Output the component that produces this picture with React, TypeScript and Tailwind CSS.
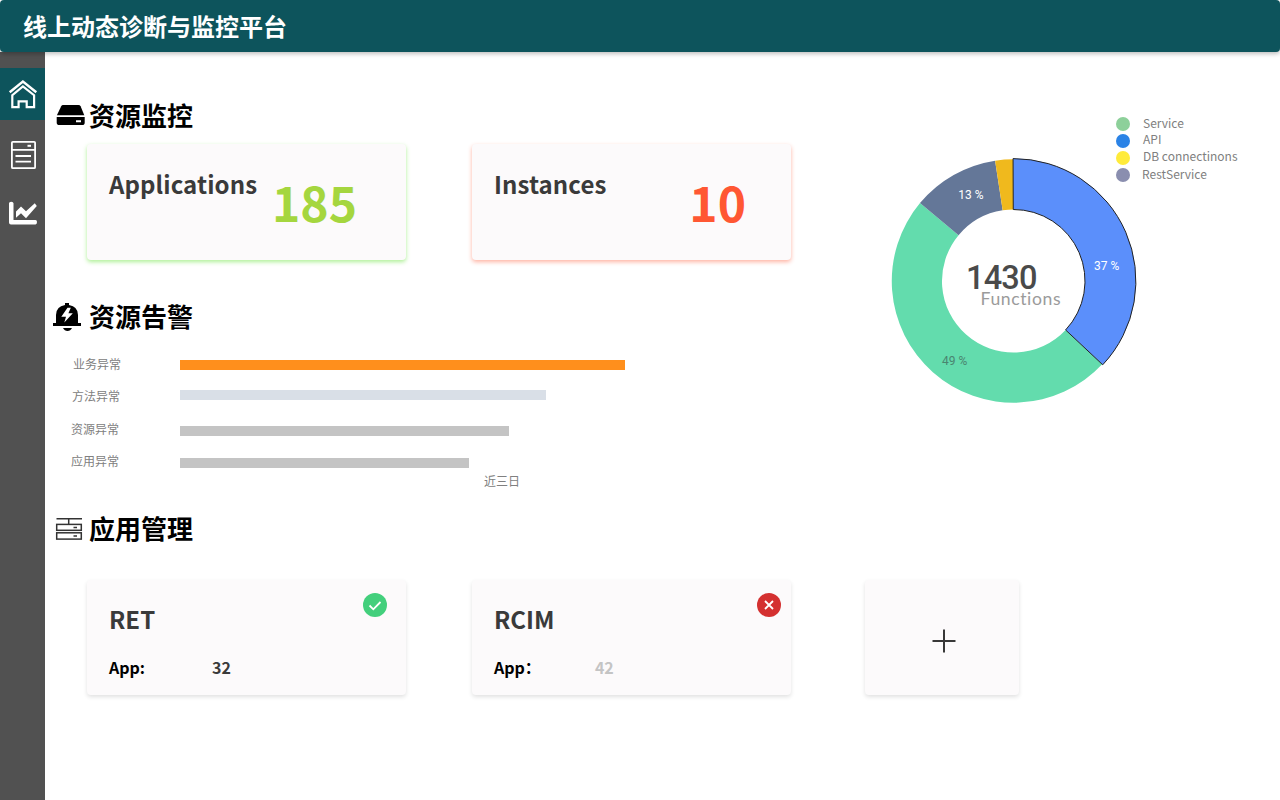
import React from "react";

const cjk = "font-['Noto_Sans_CJK_SC','Noto_Sans',sans-serif]";

function HomeIcon() {
  return (
    <svg className="h-[52px] w-[45px]" viewBox="0 68 45 52" fill="none" stroke="#fff" strokeWidth="2.4">
      <path d="M9.7 92.3 22.9 81.6 36.3 92.3" />
      <path d="M12.3 107.2V95.2L22.9 86.3 34.1 95.2V107.2H26.7V101.3H18.6V107.2Z" strokeWidth="2.2" />
    </svg>
  );
}

function ListIcon() {
  return (
    <svg className="h-[52px] w-[45px]" viewBox="0 129 45 52" fill="none" stroke="#fff" strokeWidth="1.8">
      <rect x="11.9" y="141.8" width="23.2" height="26.4" rx="1" />
      <path d="M12 149.8H35M15.5 156H31M15.5 161.6H31" />
      <path d="M27.5 145.8H31" strokeWidth="2" />
    </svg>
  );
}

function TrendIcon() {
  return (
    <svg className="h-[52px] w-[45px]" viewBox="0 187 45 52" fill="#fff">
      <path d="M9 203.3Q9 201.8 11.2 201.8T13.5 203.3V220H35.5Q37 220 37 222T35.5 224.6H11Q9 224.6 9 222.6Z" />
      <path d="M16 211.5 21 206.4 26 211.2 34.8 203.2 36.8 206 26 218.2 21 213.2 16 217.8Z" />
    </svg>
  );
}

function DriveIcon() {
  return (
    <svg className="h-[28px] w-[44px] shrink-0" viewBox="45 101 44 28">
      <path d="M63 105H78.5Q80 105 80.6 106.2L84.3 115.3H56.9L61.2 106.2Q61.8 105 63 105Z" />
      <path fillRule="evenodd" d="M56.7 117H84.7V122.7Q84.7 125 82 125H59.5Q56.7 125 56.7 122.7ZM76 120.2V122.2H81V120.2Z" />
    </svg>
  );
}

function BellIcon() {
  return (
    <svg className="h-[32px] w-[44px] shrink-0" viewBox="45 300 44 32">
      <path d="M65 303H69V305Q78 306.5 78 315V323H81V326H53V323H56V315Q56 306.5 65 305Z" />
      <path d="M63 328H72Q70.5 331 67.5 331T63 328Z" />
      <path d="M67.5 307.7 61.3 316.7H66L64.3 322.5 72.8 313.3H68.4L70.8 307.7Z" fill="#fff" />
    </svg>
  );
}

function ServersIcon() {
  return (
    <svg className="h-[28px] w-[44px] shrink-0" viewBox="45 514 44 28" fill="none" stroke="#333" strokeWidth="1.5">
      <path d="M56.5 518.7H82M68.7 519V524" />
      <rect x="56.7" y="524.4" width="24.6" height="5.9" />
      <rect x="56.7" y="532.8" width="24.6" height="6.3" />
      <path d="M73.5 527.4H77M73.5 535.9H77" />
    </svg>
  );
}

function Heading({ icon, text }: { icon: React.ReactNode; text: string }) {
  return (
    <div className="flex h-10 items-center">
      {icon}
      <h2 className="text-[26px] font-bold leading-10 text-black">{text}</h2>
    </div>
  );
}

function Metric({ label, value, className, valueClass }: { label: string; value: string; className: string; valueClass: string }) {
  return (
    <div className={`flex h-[116px] w-[319px] shrink-0 rounded-[4px] bg-[#fcfafb] ${className}`}>
      <div className="mt-[20px] text-[24px] font-bold leading-[40px] tracking-[0.1px] text-[#3a3a3a]">{label}</div>
      <div className={`ml-auto mt-[27px] text-[48px] font-bold leading-[60px] ${valueClass}`}>{value}</div>
    </div>
  );
}

const bars = [
  { name: "业务异常", row: "h-[32px] pl-[28px]", bar: "ml-[47px] mt-[10px] w-[445px] bg-[#ff8f1c]" },
  { name: "方法异常", row: "h-[33px] pl-[27px]", bar: "ml-[48px] mt-[8px] w-[366px] bg-[#d9dfe7]" },
  { name: "资源异常", row: "h-[32px] pl-[26px]", bar: "ml-[49px] mt-[11px] w-[329px] bg-[#c4c4c4]" },
  { name: "应用异常", row: "h-[24px] pl-[26px]", bar: "ml-[49px] mt-[11px] w-[289px] bg-[#c4c4c4]" },
];

const legend = [
  { name: "Service", dot: "bg-[#8dd09a]", text: "pl-[13px]" },
  { name: "API", dot: "bg-[#2b83e6]", text: "pl-[13px] -mt-[2px]" },
  { name: "DB connectinons", dot: "bg-[#ffeb3b]", text: "pl-[13px] -mt-[2px]" },
  { name: "RestService", dot: "bg-[#8a8eaf]", text: "pl-[12px]" },
];

function point(radius: number, degrees: number) {
  const a = (degrees * Math.PI) / 180;
  return `${(1013.5 + radius * Math.sin(a)).toFixed(2)} ${(281 - radius * Math.cos(a)).toFixed(2)}`;
}

function slice(from: number, to: number, outer = 121.7, inner = 71.5) {
  const large = to - from > 180 ? 1 : 0;
  return `M${point(outer, from)}A${outer} ${outer} 0 ${large} 1 ${point(outer, to)}L${point(inner, to)}A${inner} ${inner} 0 ${large} 0 ${point(inner, from)}Z`;
}

function Donut() {
  return (
    <svg className="h-[260px] w-[260px]" viewBox="885 150 260 260">
      <path d={slice(133.2, 309.8)} fill="#63dcad" />
      <path d={slice(309.8, 351.3)} fill="#647798" />
      <path d={slice(351.3, 360)} fill="#f0b91d" />
      <path d={slice(-0.2, 133.2, 122.4, 71.5)} fill="#5b8ffb" stroke="#222" strokeWidth="1" />
      <g className="font-[Roboto,sans-serif]" fontSize="12">
        <text x="1094" y="269.5" fill="#fff">37 %</text>
        <text x="958.3" y="198.5" fill="#fff">13 %</text>
        <text x="942" y="364.5" fill="#4a8570">49 %</text>
        <text x="966" y="288.5" fontSize="32.5" fontWeight="500" fill="#4a4a4a" textLength="71.5">1430</text>
      </g>
      <text x="980.5" y="304.7" fontSize="17.6" fill="#9b9b9b" textLength="80" className="font-[Lato,sans-serif] [font-variant-ligatures:none]">Functions</text>
    </svg>
  );
}

function AppCard({ name, label, count, status, countClass }: { name: string; label: string; count: string; status: React.ReactNode; countClass: string }) {
  return (
    <div className="relative h-[115px] w-[319px] shrink-0 rounded-[4px] bg-[#fcfafb] pl-[22px] pt-[19px] shadow-[0_2px_4px_rgba(0,0,0,0.12)]">
      <div className="text-[24px] font-bold leading-[40px] text-[#3a3a3a]">{name}</div>
      <div className="mt-[15px] flex text-[16px] font-bold leading-[26px] text-black">
        <span>{label}</span>
        <span className={countClass}>{count}</span>
      </div>
      {status}
    </div>
  );
}

export default function App() {
  return (
    <div className={`flex h-[800px] w-[1280px] flex-col overflow-hidden bg-white ${cjk}`}>
      <header className="z-10 flex h-[52px] shrink-0 items-center rounded-[4px] bg-[#0d545c] pl-[23px] shadow-[0_2px_4px_rgba(0,0,0,0.25)]">
        <h1 className="text-[24px] font-bold leading-[52px] text-white">线上动态诊断与监控平台</h1>
      </header>
      <div className="flex flex-1">
        <nav className="flex w-[45px] shrink-0 flex-col bg-[#515151] pt-4">
          <div className="bg-[#0d545c]"><HomeIcon /></div>
          <div className="mt-[9px]"><ListIcon /></div>
          <div className="mt-[6px]"><TrendIcon /></div>
        </nav>
        <main className="flex flex-1">
          <div className="flex w-[840px] shrink-0 flex-col pt-[43px]">
            <Heading icon={<DriveIcon />} text="资源监控" />
            <div className="ml-[42px] mt-[9px] flex gap-[66px]">
              <Metric label="Applications" value="185" className="pl-[22px] pr-[49px] shadow-[0_2px_4px_rgba(120,230,80,0.6)]" valueClass="text-[#a5d63f]" />
              <Metric label="Instances" value="10" className="pl-[22px] pr-[45px] shadow-[0_2px_4px_rgba(255,87,51,0.45)]" valueClass="text-[#ff5733]" />
            </div>
            <div className="mt-[36px]"><Heading icon={<BellIcon />} text="资源告警" /></div>
            <div className="mt-[14px] flex h-[144px] flex-col text-[12px] font-normal leading-[20px] text-[#808080]">
              {bars.map((b) => (
                <div key={b.name} className={`flex shrink-0 ${b.row}`}>
                  <span className="mt-[4px] w-[60px]">{b.name}</span>
                  <div className={`h-[10px] ${b.bar}`} />
                </div>
              ))}
              <span className="pl-[439px]">近三日</span>
            </div>
            <div className="mt-[14px]"><Heading icon={<ServersIcon />} text="应用管理" /></div>
            <div className="ml-[42px] mt-[32px] flex gap-[66px]">
              <AppCard name="RET" label="App:" count="32" countClass="pl-[67px] text-[#3a3a3a]" status={
                <svg className="absolute left-[276px] top-[13px] h-6 w-6" viewBox="0 0 24 24">
                  <circle cx="12" cy="12" r="12" fill="#43cf7c" />
                  <path d="M6.5 12.5 10.3 16.3 17.5 9" fill="none" stroke="#fff" strokeWidth="1.8" />
                </svg>
              } />
              <AppCard name="RCIM" label="App：" count="42" countClass="pl-[54px] text-[#c4c4c4]" status={
                <svg className="absolute left-[285px] top-[13px] h-6 w-6" viewBox="0 0 24 24">
                  <circle cx="12" cy="12" r="12" fill="#d43030" />
                  <path d="M8 8 16 16M16 8 8 16" fill="none" stroke="#fff" strokeWidth="1.8" />
                </svg>
              } />
              <button className="ml-[8px] flex h-[115px] w-[154px] shrink-0 items-center justify-center rounded-[4px] bg-[#fcfafb] pl-[4px] pt-[7px] shadow-[0_2px_4px_rgba(0,0,0,0.12)]">
                <svg className="h-6 w-6" viewBox="0 0 24 24" stroke="#383838" strokeWidth="2">
                  <path d="M12 .5V23.5M.5 12H23.5" />
                </svg>
              </button>
            </div>
          </div>
          <div className="flex flex-1 flex-col pt-[63px]">
            <div className="flex h-[35px] w-full flex-col pl-[231px]">
              {legend.map((item) => (
                <div key={item.name} className="flex h-[17px] shrink-0 items-center">
                  <span className={`h-[14px] w-[14px] shrink-0 rounded-full ${item.dot}`} />
                  <span className={`-translate-y-px whitespace-nowrap text-[12px] font-normal leading-[17px] text-[#808080] ${item.text}`}>{item.name}</span>
                </div>
              ))}
            </div>
            <Donut />
          </div>
        </main>
      </div>
    </div>
  );
}
